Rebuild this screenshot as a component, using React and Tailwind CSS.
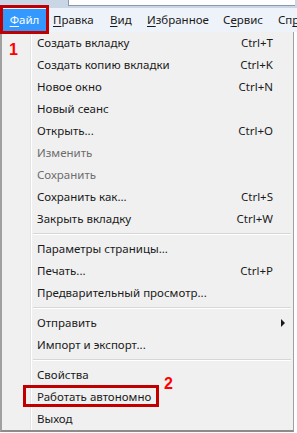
const font = { fontFamily: '"Segoe UI", "Noto Sans", "Open Sans", sans-serif' }

function MenuRow({ label, shortcut, disabled, arrow }) {
  return (
    <div className="flex h-[22px] items-center pl-[35px] pr-[20px]">
      <span className={disabled ? "flex-1 text-[#6d6d6d]" : "flex-1 text-[#1a1a1a]"}>{label}</span>
      {shortcut && <span className="text-[#1a1a1a]">{shortcut}</span>}
      {arrow && (
        <span className="mr-[-12px] h-0 w-0 border-y-[4px] border-l-[4px] border-y-transparent border-l-[#1a1a1a]" />
      )}
    </div>
  )
}

function Separator() {
  return (
    <div className="flex h-[8px] items-center pl-[31px] pr-[2px]">
      <div className="h-[2px] w-full border-b border-t border-b-white border-t-[#d7d7d7]" />
    </div>
  )
}

function MenuLink({ first, rest }) {
  return (
    <span>
      <span className="underline underline-offset-2">{first}</span>
      {rest}
    </span>
  )
}

export default function App() {
  const groups = [
    [
      { label: "Создать вкладку", shortcut: "Ctrl+T" },
      { label: "Создать копию вкладки", shortcut: "Ctrl+K" },
      { label: "Новое окно", shortcut: "Ctrl+N" },
      { label: "Новый сеанс" },
      { label: "Открыть...", shortcut: "Ctrl+O" },
      { label: "Изменить", disabled: true },
      { label: "Сохранить", disabled: true },
      { label: "Сохранить как...", shortcut: "Ctrl+S" },
      { label: "Закрыть вкладку", shortcut: "Ctrl+W" },
    ],
    [
      { label: "Параметры страницы..." },
      { label: "Печать...", shortcut: "Ctrl+P" },
      { label: "Предварительный просмотр..." },
    ],
    [{ label: "Отправить", arrow: true }, { label: "Импорт и экспорт..." }],
    [{ label: "Свойства" }, { label: "Работать автономно", marked: true }, { label: "Выход" }],
  ]

  return (
    <div className="relative h-[433px] w-[297px] overflow-hidden bg-white text-[11.5px]" style={font}>
      {/* browser chrome strip */}
      <div className="flex h-[8px] bg-[#c9d6e6]">
        <div className="ml-[68px] mr-[2px] h-[6px] flex-1 border-b border-l border-[#8a99ad] bg-white" />
      </div>

      {/* menu bar */}
      <div className="flex h-[24px] items-center overflow-hidden whitespace-nowrap bg-[#eef3fa] text-[#1a1a1a]">
        <div className="ml-[3px] flex h-[22px] w-[43px] shrink-0 items-center justify-center bg-[#3399ff] text-white">
          <MenuLink first="Ф" rest="айл" />
        </div>
        <div className="ml-[7px] w-[57px] shrink-0"><MenuLink first="П" rest="равка" /></div>
        <div className="w-[37px] shrink-0"><MenuLink first="В" rest="ид" /></div>
        <div className="w-[76px] shrink-0"><MenuLink first="И" rest="збранное" /></div>
        <div className="w-[55px] shrink-0">С<MenuLink first="е" rest="рвис" /></div>
        <div className="shrink-0">Сп<MenuLink first="р" rest="авка" /></div>
      </div>

      {/* dropdown */}
      <div className="relative h-[400px] w-[294px] border-b-2 border-l-2 border-r border-b-[#8c8c8c] border-l-[#a0a0a0] border-r-[#a0a0a0] bg-[#f0f0f0]">
        <div className="absolute bottom-0 left-[28px] top-0 w-[2px] border-l border-r border-l-[#e2e3e3] border-r-white" />
        <div className="relative">
          {groups.map((group, i) => (
            <div key={i}>
              {i > 0 && <Separator />}
              {group.map((item) => (
                <div key={item.label} className="relative">
                  <MenuRow {...item} />
                  {item.marked && (
                    <div className="absolute left-[21px] top-[-1px] h-[22px] w-[136px] border-[3px] border-[#c00000]" />
                  )}
                </div>
              ))}
            </div>
          ))}
        </div>
      </div>

      {/* annotations */}
      <div className="absolute left-0 top-[5px] h-[29px] w-[49px] border-[3px] border-[#c00000]" />
      <div className="absolute left-[9px] top-[38px] text-[16px] font-bold text-[#ff0000]" style={{ fontFamily: '"Liberation Sans", Arial, sans-serif' }}>1</div>
      <div className="absolute left-[164px] top-[372px] text-[16px] font-bold text-[#ff0000]" style={{ fontFamily: '"Liberation Sans", Arial, sans-serif' }}>2</div>
    </div>
  )
}
